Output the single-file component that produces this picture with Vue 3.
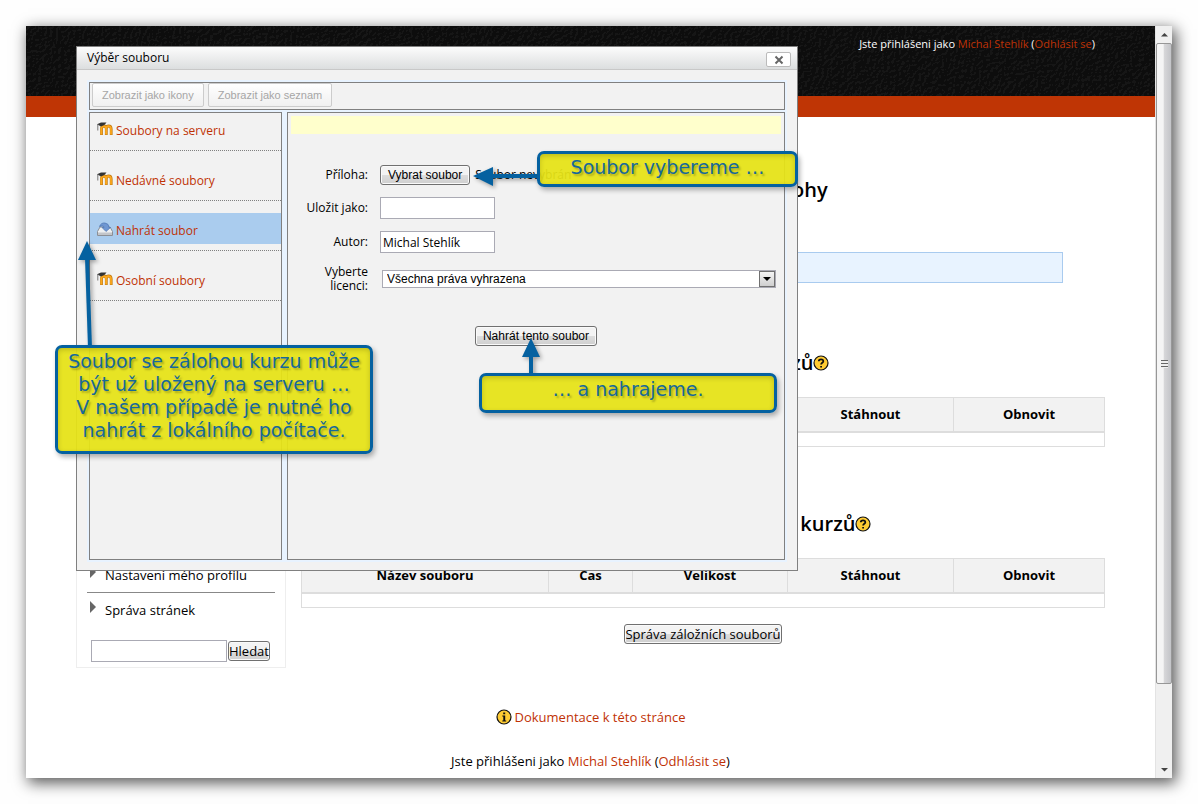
<script setup>
import { ref } from 'vue'

const columns = ['Název souboru', 'Čas', 'Velikost', 'Stáhnout', 'Obnovit']
const areas = ['Oblast pro uložení kurzů', 'Soukromá oblast na zálohy kurzů']
const repositories = [
  { name: 'Soubory na serveru', icon: 'moodle' },
  { name: 'Nedávné soubory', icon: 'moodle' },
  { name: 'Nahrát soubor', icon: 'upload' },
  { name: 'Osobní soubory', icon: 'moodle' },
]
const active = ref('Nahrát soubor')
const search = ref('')
const saveAs = ref('')
const author = ref('Michal Stehlík')
</script>

<template>
  <div class="desktop">
    <div class="window">
      <div class="page">
        <header class="banner">
          <svg class="grain" aria-hidden="true">
            <filter id="leather" x="0" y="0" width="100%" height="100%">
              <feTurbulence type="fractalNoise" baseFrequency="0.35" numOctaves="2" seed="4" />
              <feDiffuseLighting lighting-color="#141414" surfaceScale="1" diffuseConstant="1">
                <feDistantLight azimuth="225" elevation="45" />
              </feDiffuseLighting>
            </filter>
            <rect width="100%" height="100%" filter="url(#leather)" />
          </svg>
          <p class="login">Jste přihlášeni jako <a href="#">Michal Stehlík</a> (<a href="#">Odhlásit se</a>)</p>
        </header>
        <div class="stripe"></div>

        <div class="columns">
          <aside class="block">
            <a class="tree" href="#"><svg viewBox="0 0 6 12"><path d="M0 0 6 6 0 12z" /></svg>Nastavení mého profilu</a>
            <hr />
            <a class="tree" href="#"><svg viewBox="0 0 6 12"><path d="M0 0 6 6 0 12z" /></svg>Správa stránek</a>
            <form class="search" @submit.prevent>
              <input v-model="search" type="text" aria-label="Hledat" />
              <button class="native" type="submit">Hledat</button>
            </form>
          </aside>

          <main class="content">
            <h2>Importovat soubor zálohy</h2>
            <div class="infobox"></div>
            <template v-for="title in areas" :key="title">
              <h2 class="area">{{ title }}<svg class="badge" viewBox="0 0 16 16" role="img" aria-label="Nápověda">
                <circle cx="8" cy="8" r="7" fill="#fc3" stroke="#111" stroke-width="1.2" />
                <path d="M5.800 6.300C5.800 3.800 10.300 3.800 10.300 6.200 10.300 7.800 8.100 7.800 8.100 9.600M8.100 10.900v1.600" fill="none" stroke="#111" stroke-width="1.800" />
              </svg></h2>
              <table>
                <colgroup><col class="c1" /><col class="c2" /><col class="c3" /><col class="c4" /><col class="c5" /></colgroup>
                <thead><tr><th v-for="c in columns" :key="c" scope="col">{{ c }}</th></tr></thead>
                <tbody><tr><td colspan="5"></td></tr></tbody>
              </table>
            </template>
            <button class="native manage" type="button">Správa záložních souborů</button>
          </main>
        </div>

        <footer>
          <p class="docs"><svg class="badge" viewBox="0 0 16 16" aria-hidden="true">
            <circle cx="8" cy="8" r="7" fill="#fc3" stroke="#111" stroke-width="1.200" />
            <path d="M7.200 3.500h2v1.700h-2zM6.300 6.400h2.900v5h1v1H6.300v-1h1V7.400h-1z" fill="#111" />
          </svg><a href="#">Dokumentace k této stránce</a></p>
          <p>Jste přihlášeni jako <a href="#">Michal Stehlík</a> (<a href="#">Odhlásit se</a>)</p>
        </footer>
      </div>

      <div class="scrollbar" aria-hidden="true">
        <svg viewBox="0 0 17 17"><path d="M5 10.500 8.500 7 12 10.500z" /></svg>
        <div class="thumb"><i></i></div>
        <svg viewBox="0 0 17 17"><path d="M5 7 8.500 10.500 12 7z" /></svg>
      </div>
    </div>

    <section class="dialog" role="dialog" aria-labelledby="dlg-title">
      <header class="titlebar">
        <h1 id="dlg-title">Výběr souboru</h1>
        <button type="button" aria-label="Zavřít"><svg viewBox="0 0 10 10"><path d="M1.500 1.500 8.500 8.500M8.500 1.500 1.500 8.500" /></svg></button>
      </header>
      <div class="picker">
        <div class="toolbar">
          <button type="button" disabled>Zobrazit jako ikony</button>
          <button type="button" disabled>Zobrazit jako seznam</button>
        </div>
        <ul class="repos">
          <li v-for="r in repositories" :key="r.name">
            <a href="#" :class="{ active: active === r.name }" @click.prevent="active = r.name">
              <svg v-if="r.icon === 'moodle'" viewBox="0 0 16 14" aria-hidden="true">
                <path d="M4.500 13V7q0-3 2.400-3T9.300 7V13M9.300 7q0-3 2.400-3T14.200 7V13" fill="none" stroke="#c07a12" stroke-width="2.800" />
                <path d="M4.300 12.600V7q0-2.900 2.400-2.900T9.100 7V12.600M9.100 7q0-2.900 2.400-2.900T14 7V12.600" fill="none" stroke="#fba71c" stroke-width="1.800" />
                <path d="M0 2.200 4 .4h5.500L7.400 3 4 4.500z" fill="#333" />
                <path d="M.8 2v6.500" stroke="#777" fill="none" />
              </svg>
              <svg v-else viewBox="0 0 16 14" aria-hidden="true">
                <path d="M3 5h10l2.500 4.500V13.500H.5V9.500z" fill="#eef0f2" stroke="#8b8f96" />
                <path d="M1 10.500h14v2.500H1z" fill="#c2c5ca" />
                <path d="M2.500 4.500Q4 .5 8 1t4 4.500h1.500L9 9.500 5 5.500h2Q7 3 2.500 4.500z" fill="#6f97d2" stroke="#4c72b0" stroke-width=".7" />
              </svg>
              <span>{{ r.name }}</span>
            </a>
          </li>
        </ul>
        <form class="upload" @submit.prevent>
          <div class="path"></div>
          <div class="fields">
            <label for="file">Příloha:</label>
            <div class="file"><button id="file" class="native arial" type="button">Vybrat soubor</button><span>Soubor nevybrán</span></div>
            <label for="saveas">Uložit jako:</label>
            <input id="saveas" v-model="saveAs" type="text" />
            <label for="author">Autor:</label>
            <input id="author" v-model="author" type="text" />
            <label for="licence">Vyberte licenci:</label>
            <div class="select">
              <select id="licence"><option>Všechna práva vyhrazena</option></select>
              <span class="arrow"><svg viewBox="0 0 8 4"><path d="M0 0h8L4 4z" /></svg></span>
            </div>
          </div>
          <button class="native arial send" type="submit">Nahrát tento soubor</button>
        </form>
      </div>
    </section>

    <svg class="arrows" aria-hidden="true">
      <g stroke="#0561a0" stroke-width="4"><path d="M540 176H490" /><path d="M90 348 87 258" /><path d="M531 376V354" /></g>
      <g fill="#0561a0"><path d="M473 176 493 167V186z" /><path d="M87 241 78 260H96z" /><path d="M531 338 522 357H540z" /></g>
    </svg>
    <p class="callout choose">Soubor vybereme …</p>
    <p class="callout send-note">… a nahrajeme.</p>
    <p class="callout origin">Soubor se zálohou kurzu může<br />být už uložený na serveru …<br />V našem případě je nutné ho<br />nahrát z lokálního počítače.</p>
  </div>
</template>

<style>
body { margin: 0; background: #fefefe; }
</style>

<style scoped>
* { box-sizing: border-box; }
h1, h2, p, ul { margin: 0; padding: 0; }
a { color: #bf3205; text-decoration: none; }
button, input, select { font: inherit; color: #000; }
svg { display: block; }

.desktop {
  position: relative;
  min-height: 100vh;
  padding: 26px;
  display: flex;
  font: 13px/18px "Open Sans", "Trebuchet MS", sans-serif;
  color: #000;
  overflow: hidden;
}
.window {
  flex: 1;
  display: flex;
  background: #fff;
  box-shadow: 3px 4px 14px 1px rgba(0, 0, 0, .65);
}
.page { flex: 1; display: flex; flex-direction: column; }
.banner { position: relative; height: 70px; background: #0b0b0b; padding: 9px 60px; }
.grain { position: absolute; inset: 0; width: 100%; height: 100%; }
.login { position: relative; text-align: right; color: #fff; font-size: 11px; }
.stripe { height: 21px; background: #bf3505; }

.columns { display: grid; grid-template-columns: 210px 1fr; gap: 15px; padding: 10px 50px 0; align-items: start; }
.block {
  min-height: 541px;
  border: 1px solid #eee;
  padding: 0 10px 5px;
  display: flex;
  flex-direction: column;
  justify-content: flex-end;
}
.tree { display: flex; align-items: flex-start; gap: 9px; padding-left: 3px; color: #000; }
.tree svg { width: 6px; height: 12px; fill: #666; }
hr { width: 100%; border: 0; border-top: 1px solid #888; margin: 8px 0; }
.search { display: flex; gap: 1px; align-items: center; margin: 21px 0 0 4px; }
.search input { width: 136px; height: 22px; }
input { border: 1px solid #aaaab4; background: #fff; padding: 0 2px; margin: 0; border-radius: 0; }
.native {
  border: 1px solid #707070;
  border-radius: 3px;
  background: linear-gradient(#f3f3f3 0 48%, #dcdcdc 52%, #cfcfcf);
  box-shadow: inset 0 0 0 1px #fafafa;
  padding: 0;
  height: 20px;
  line-height: 18px;
  white-space: nowrap;
}
.arial { font-family: "Liberation Sans", Arial, sans-serif; font-size: 12px; padding: 0 7px; }

.content { display: flex; flex-direction: column; padding-top: 49px; }
h2 { text-align: center; font-size: 20px; line-height: 28px; font-weight: 600; }
.infobox { width: 720px; height: 31px; margin: 48px auto 66px; background: #e8f3ff; border: 1px solid #a9cbef; }
.area { display: flex; justify-content: center; align-items: center; }
.badge { width: 16px; height: 16px; flex: none; }
table { width: 100%; table-layout: fixed; border-collapse: collapse; margin: 20px 0 63px; }
.c1 { width: 247px; } .c2 { width: 84px; } .c3 { width: 155px; } .c4 { width: 166px; } .c5 { width: 151px; }
th { height: 34px; padding: 0; border: 1px solid #ddd; border-bottom-width: 2px; background: #f2f2f2; font-weight: 700; }
td { height: 15px; padding: 0; border: 1px solid #ddd; }
.content table:last-of-type { margin-bottom: 16px; }
.manage { align-self: center; }

footer { margin-top: auto; padding-bottom: 8px; text-align: center; }
footer p { display: flex; justify-content: center; white-space: pre; }
.docs { gap: 3px; align-items: center; margin-bottom: 26px; }

.scrollbar { width: 17px; background: #f0f0f0; display: flex; flex-direction: column; border-left: 1px solid #e3e3e3; }
.scrollbar svg { width: 17px; height: 17px; fill: #444; }
.thumb { flex: none; height: 641px; border: 1px solid #979797; border-radius: 2px; background: linear-gradient(90deg, #f5f5f5 45%, #d8d8da 50%, #c3c4c8); display: flex; align-items: center; justify-content: center; }
.thumb i { width: 7px; height: 8px; background: repeating-linear-gradient(#666 0 1px, #eee 1px 3px); }
.scrollbar svg:last-child { margin-top: auto; }

.dialog { position: absolute; left: 76px; top: 46px; width: 722px; border: 1px solid #808080; background: #f2f2f2; }
.titlebar { height: 23px; display: flex; align-items: center; justify-content: space-between; padding: 0 6px 0 10px; background: linear-gradient(#fcfcfc, #dcdedf); border-bottom: 1px solid #c8c8c8; }
.titlebar h1 { font-size: 12px; font-weight: 500; }
.titlebar button { width: 25px; height: 15px; margin-top: 3px; padding: 0; border: 1px solid #bbb; border-radius: 2px; background: #fff; display: flex; align-items: center; justify-content: center; }
.titlebar svg { width: 10px; height: 10px; fill: none; stroke: #666; stroke-width: 2; }
.picker { display: grid; grid-template: 28px 448px / 193px 1fr; gap: 2px 5px; margin: 12px 12px 10px; background: #e8f3ff; box-shadow: 0 0 0 2px #e8f3ff; }
.toolbar { grid-column: 1 / -1; border: 1px solid #808080; background: #f2f2f2; display: flex; gap: 4px; padding: 0 2px; align-items: flex-start; }
.toolbar button { height: 24px; padding: 0 9px; border: 1px solid #ccc; border-radius: 2px; background: linear-gradient(#fff, #f0f0f0); color: #a6a6a6; font: 11px/22px "Liberation Sans", Arial, sans-serif; }
.repos { list-style: none; border: 1px solid #808080; background: #f2f2f2; }
.repos li { height: 50px; border-bottom: 1px dotted #808080; display: flex; align-items: flex-end; padding-bottom: 6px; }
.repos li:first-child { height: 38px; }
.repos a { flex: 1; height: 31px; display: flex; align-items: center; gap: 3px; padding-left: 7px; font-size: 12px; }
.repos a.active { background: #aaccee; }
.repos span { padding-top: 4px; }
.repos svg { width: 16px; height: 14px; }
.upload { border: 1px solid #808080; background: #f2f2f2; padding: 3px; display: flex; flex-direction: column; }
.path { height: 18px; background: #ffc; }
.fields { display: grid; grid-template-columns: 77px 1fr; column-gap: 12px; row-gap: 12px; margin: 31px 5px 0 0; align-items: center; font-size: 12px; }
.fields label { text-align: right; line-height: 14px; }
.fields input { width: 115px; height: 22px; }
.file { display: flex; align-items: center; gap: 5px; }
.select { position: relative; margin-left: 2px; height: 18px; }
.select select { appearance: none; display: block; width: 100%; height: 18px; border: 1px solid #aaaab4; border-radius: 0; background: #fff; padding: 0 4px; font: 12px "Liberation Sans", Arial, sans-serif; }
.arrow { position: absolute; right: 1px; top: 1px; width: 16px; height: 16px; border: 1px solid #707070; background: linear-gradient(#f4f4f4, #cfcfcf); display: flex; align-items: center; justify-content: center; pointer-events: none; }
.arrow svg { width: 8px; height: 4px; }
.send { align-self: center; margin-top: 33px; }

.arrows { position: absolute; inset: 0; width: 100%; height: 100%; pointer-events: none; filter: drop-shadow(2px 2px 2px rgba(0, 0, 0, .35)); }
.callout {
  position: absolute;
  border: 3px solid #0561a0;
  border-radius: 7px;
  background: rgba(230, 226, 22, .94);
  box-shadow: 2px 3px 5px rgba(0, 0, 0, .3), inset 0 2px 5px rgba(100, 100, 0, .3);
  color: #16689a;
  font: 19px/23px "DejaVu Sans", Verdana, sans-serif;
  text-align: center;
  text-shadow: 2px 2px 2px rgba(0, 0, 0, .25);
  white-space: nowrap;
  padding-top: 2px;
}
.choose { left: 537px; top: 151px; width: 261px; height: 36px; }
.send-note { left: 479px; top: 373px; width: 298px; height: 40px; }
.origin { left: 55px; top: 345px; width: 318px; height: 109px; }
</style>
